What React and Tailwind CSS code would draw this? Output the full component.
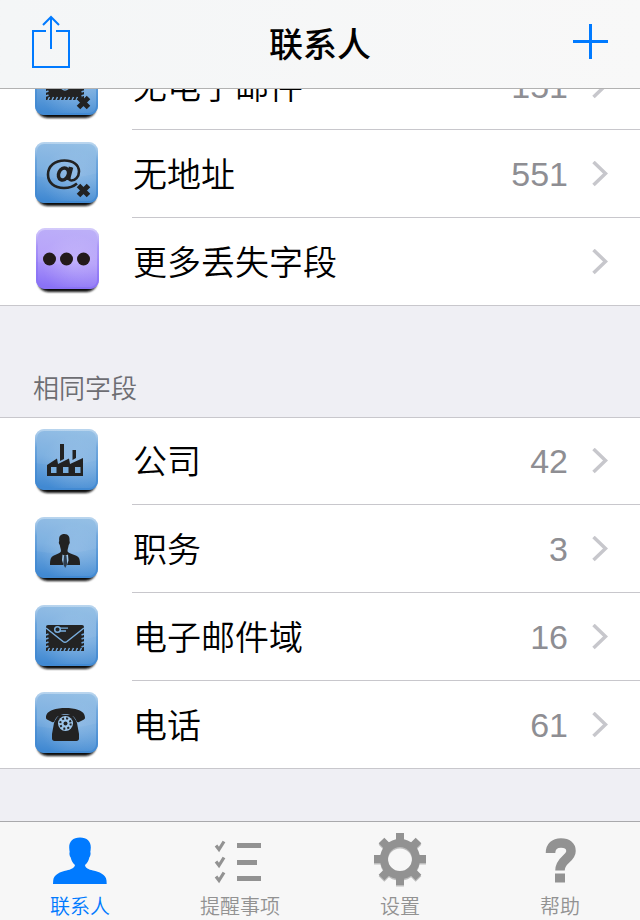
import React from "react";

const BLUE = ["#8fbce4", "#78ade0", "#4189d2"];
const VIOLET = ["#b9abf8", "#b5a0fa", "#8a72f6"];

function Tile({ id, colors = BLUE, x = 1, y = 2, children }) {
  return (
    <svg viewBox="0 1 66 67" className="h-[67px] w-[66px] shrink-0" aria-hidden="true">
      <defs>
        <linearGradient id={id + "-face"} x1="0.6" y1="0" x2="0.4" y2="1">
          <stop offset="0" stopColor={colors[0]} />
          <stop offset="0.5" stopColor={colors[1]} />
          <stop offset="1" stopColor={colors[2]} />
        </linearGradient>
        <radialGradient id={id + "-glow"} cx="0.6" cy="0.6" r="0.5">
          <stop offset="0" stopColor="#fff" stopOpacity="0.16" />
          <stop offset="1" stopColor="#fff" stopOpacity="0" />
        </radialGradient>
        <linearGradient id={id + "-edge"} x1="0" y1="0" x2="0" y2="1">
          <stop offset="0" stopColor="#fff" stopOpacity="0.35" />
          <stop offset="0.3" stopColor={colors[2]} stopOpacity="0.35" />
          <stop offset="1" stopColor={colors[2]} stopOpacity="0.9" />
        </linearGradient>
        <filter id={id + "-blur"} x="-10%" y="-10%" width="120%" height="120%">
          <feGaussianBlur stdDeviation="1" />
        </filter>
      </defs>
      <rect x={x + 2} y={y + 7} width="59" height="57" rx="10" fill="#111" filter={`url(#${id}-blur)`} />
      <rect x={x} y={y} width="63" height="61" rx="9" fill={`url(#${id}-face)`} />
      <rect x={x} y={y} width="63" height="61" rx="9" fill={`url(#${id}-glow)`} />
      <path
        d={`M${x} ${y + 34}V${y + 9}a9 9 0 0 1 9-9h45a9 9 0 0 1 9 9v22q-31 9-63 3z`}
        fill="#fff"
        fillOpacity="0.05"
      />
      <rect x={x + 1} y={y + 1} width="61" height="59" rx="8" fill="none" stroke={`url(#${id}-edge)`} strokeWidth="2" />
      {children}
    </svg>
  );
}

function Cross() {
  return <path d="M44.500 45.500l10 10M54.500 45.500l-10 10" stroke="#222" strokeWidth="5" fill="none" />;
}

function Envelope() {
  return (
    <>
      <path d="M14 22h34a2 2 0 0 1 2 2v24H12V24a2 2 0 0 1 2-2z" fill="#232323" />
      <path
        d="M14 48l1.500-3M18 48l1.500-3M22 48l1.500-3M26 48l1.500-3M30 48l1.500-3M34 48l1.500-3M38 48l1.500-3M42 48l1.500-3M46 48l1.500-3M12 32l2.500-1M12 36l2.500-1M12 40l2.500-1M12 44l2.500-1M47.500 32l2.500-1M47.500 36l2.500-1M47.500 40l2.500-1M47.500 44l2.500-1"
        stroke="#6fa6db"
        strokeWidth="1.500"
      />
    </>
  );
}

function MissingMailIcon() {
  return (
    <Tile id="missing-mail">
      <Envelope />
      <circle cx="31" cy="34" r="4" fill="none" stroke="#7fb3e1" strokeWidth="1.500" />
      <Cross />
    </Tile>
  );
}

function MissingAddressIcon() {
  return (
    <Tile id="missing-address">
      <path
        d="M43 43.500C39 47 34 48 30 48C20 48 14 42.500 14 34.500C14 26 21 20.500 30.500 20.500C39 20.500 45 25 45 31.500C45 37 41 40.500 37.500 40.500C35.500 40.500 35 39 35.500 37L38 27.500"
        fill="none"
        stroke="#222"
        strokeWidth="2.600"
      />
      <path d="M36.500 27l-3 13" fill="none" stroke="#222" strokeWidth="3.500" />
      <ellipse cx="29.500" cy="34" rx="4.800" ry="6.300" transform="rotate(25 29.500 34)" fill="none" stroke="#222" strokeWidth="3.500" />
      <Cross />
    </Tile>
  );
}

function MoreIcon() {
  return (
    <Tile id="more" colors={VIOLET} x={2} y={1}>
      <circle cx="15.500" cy="32" r="6.500" fill="#231a1a" />
      <circle cx="32.500" cy="32" r="6.500" fill="#231a1a" />
      <circle cx="49.500" cy="32" r="6.500" fill="#231a1a" />
    </Tile>
  );
}

function CompanyIcon() {
  return (
    <Tile id="company">
      <path
        d="M13 49V38l10-6.500 1 5.500 11-5.500 1 5.500 13-6v18zM26 17h4v15l-4 2zM38.500 23H42v8l-3.500 2z"
        fill="#222"
      />
      <path d="M17 40h5.500v6H17zM29 40h5.500v6H29zM41 40h5.500v6H41z" fill="#79aede" />
    </Tile>
  );
}

function JobIcon() {
  return (
    <Tile id="job">
      <path
        d="M30.500 19c4 0 5.500 3 5 7 .6 1 .2 3-.8 4-.5 3-1.200 4-1.200 6 0 3 9.500 3.500 11.500 7 1 2 1 5 1 7H16c0-2 0-5 1-7 2-3.500 10-4 10-7 0-2-.7-3-1.200-6-1-1-1.300-3-.6-4-.5-5 1.300-7 5.300-7z"
        fill="#222"
      />
      <path d="M28.500 39.500l2.500 1.500 3-1.500.5 6-1.500 4.500h-3.500L28 45z" fill="#9cc5ea" />
      <path d="M30 41h2.500l.7 8-2 4-2-4z" fill="#2d3d4e" />
    </Tile>
  );
}

function DomainIcon() {
  return (
    <Tile id="domain">
      <Envelope />
      <path d="M12 25l17 13.500q2 1.500 4 0L50 25" fill="none" stroke="#79aede" strokeWidth="1.500" />
      <circle cx="23.500" cy="26.500" r="2.800" fill="none" stroke="#79aede" strokeWidth="1.500" />
      <path d="M26 25.200h8M26 28h6" stroke="#79aede" strokeWidth="1.300" />
    </Tile>
  );
}

function PhoneIcon() {
  return (
    <Tile id="phone">
      <path
        d="M12 27.500C12 20 23 18 31.500 18S51 20 51 27.500c0 1-.3 1.500-1 2l-5 2.500c-1 .4-2 .2-2.500-.8-1.700-5-5.500-7-11-7s-9.300 2-11 7c-.5 1-1.500 1.200-2.500.8l-5-2.500c-.7-.5-1-1-1-2z"
        fill="#222"
      />
      <path
        d="M24.500 22.500H27V25h9v-2.500h2.500V26c2 2 3.500 4 4.500 7l2 11v4.500c0 1.500-1 2.500-2.500 2.500h-22C19 51 18 50 18 48.500V44l2-11c1-3 2.500-5 4.500-7z"
        fill="#222"
      />
      <circle cx="31.500" cy="33.500" r="7.500" fill="#9cc5ea" />
      <circle cx="31.500" cy="33.500" r="5.200" fill="none" stroke="#222" strokeWidth="2" strokeDasharray="2 2.080" />
      <circle cx="31.500" cy="33.500" r="2" fill="#222" />
    </Tile>
  );
}

const missingFields = [
  { label: "无电子邮件", count: "151", Icon: MissingMailIcon },
  { label: "无地址", count: "551", Icon: MissingAddressIcon },
  { label: "更多丢失字段", count: "", Icon: MoreIcon },
];

const sharedFields = [
  { label: "公司", count: "42", Icon: CompanyIcon },
  { label: "职务", count: "3", Icon: JobIcon },
  { label: "电子邮件域", count: "16", Icon: DomainIcon },
  { label: "电话", count: "61", Icon: PhoneIcon },
];

function FieldList({ items, className }) {
  return (
    <ul className={"bg-white " + className}>
      {items.map(({ label, count, Icon }, i) => (
        <li key={label} className={i === items.length - 1 ? "h-22 border-b border-[#c8c7cc]" : "h-22"}>
          <button type="button" className="flex h-full w-full items-stretch pl-[34px] text-left">
            <span className="flex w-[98px] shrink-0 items-center">
              <Icon />
            </span>
            <span
              className={
                "flex min-w-0 flex-1 items-center pr-8 pl-px " +
                (i === items.length - 1 ? "" : "border-b border-[#c8c7cc]")
              }
            >
              <span className="min-w-0 flex-1 truncate pt-[2px] text-[34px] leading-[50px] font-[350] text-black">
                {label}
              </span>
              <span className="mr-6 text-[34px] leading-[50px] text-[#8e8e93]">{count}</span>
              <svg viewBox="0 0 16 26" className="h-[26px] w-4 shrink-0" aria-hidden="true">
                <path d="M1.500 1L13.500 12.500 1.500 24" fill="none" stroke="#c7c7cc" strokeWidth="3.500" />
              </svg>
            </span>
          </button>
        </li>
      ))}
    </ul>
  );
}

function ContactsGlyph() {
  return (
    <path
      d="M28 5.500c7 0 11 4 10.800 10-.1 2-.3 3.500-.5 4.500.6 1 .3 4-1 5.500-.6 3.500-2 5.500-4.300 7.500.2 3 3.500 4.500 8 5.500 6 1.500 13 3.500 13.500 10l.2 3.500H1l.2-3.500C1.700 42 8.500 40 14.500 38.500c4.500-1 8-2.500 8.500-5.500-2.300-2-3.600-4-4.300-7.500-1.300-1.500-1.600-4.500-1-5.500-.2-1-.4-2.500-.5-4.500C17 9.500 21 5.500 28 5.500z"
      fill="currentColor"
    />
  );
}

function RemindersGlyph() {
  return (
    <>
      <path
        d="M4 13.500l3 4 5-8M4 29.500l3 4 5-8M4 44.500l3 4 5-8"
        fill="none"
        stroke="currentColor"
        strokeWidth="3.200"
      />
      <path d="M25 11h24v5H25zM25 28h20v5H25zM25 44h24v5H25z" fill="currentColor" />
    </>
  );
}

function GearShape({ y, color }) {
  return (
    <g transform={`translate(28 ${y})`} stroke={color} fill="none">
      <circle r="16" strokeWidth="8" />
      <path d="M0-26v8M0 18v8M-26 0h8M18 0h8M-18.500-18.500l6 6M18.500-18.500l-6 6M-18.500 18.500l6-6M18.500 18.500l-6-6" strokeWidth="8" />
    </g>
  );
}

function SettingsGlyph() {
  return (
    <>
      <GearShape y={28.5} color="#bdbdbd" />
      <GearShape y={27} color="currentColor" />
    </>
  );
}

function HelpGlyph() {
  return (
    <>
      <path
        d="M18.500 21C18.500 14.500 22.500 11 29 11S39 14 39 19c0 8-11 8.500-11 19.500"
        fill="none"
        stroke="currentColor"
        strokeWidth="9.500"
      />
      <path d="M23 41.500h10V50.500H23z" fill="currentColor" />
    </>
  );
}

const tabs = [
  { label: "联系人", Glyph: ContactsGlyph, active: true },
  { label: "提醒事项", Glyph: RemindersGlyph },
  { label: "设置", Glyph: SettingsGlyph },
  { label: "帮助", Glyph: HelpGlyph },
];

export default function App() {
  return (
    <div className="flex h-screen flex-col overflow-hidden bg-[#efeff4] font-['Liberation_Sans','Noto_Sans_CJK_SC',sans-serif]">
      <header className="relative z-10 grid shrink-0 grid-cols-3 items-center border-b border-[#b2b2b2] bg-linear-to-r from-[#f4f6f7] to-[#f8f8f8] px-8 text-[#007aff]">
        <button type="button" aria-label="分享" className="justify-self-start">
          <svg viewBox="0 0 38 58" className="h-[58px] w-[38px]" aria-hidden="true">
            <path d="M14 16H1v36h36V16H24M19 34V2M11 10l8-8 8 8" fill="none" stroke="currentColor" strokeWidth="2" />
          </svg>
        </button>
        <h1 className="pt-5 pb-[18px] text-center text-[34px] leading-[50px] font-medium whitespace-nowrap text-black">联系人</h1>
        <button type="button" aria-label="添加" className="justify-self-end">
          <svg viewBox="0 0 35 40" className="h-10 w-[35px]" aria-hidden="true">
            <path d="M17.500 0v35M0 17.500h35" fill="none" stroke="currentColor" strokeWidth="3" />
          </svg>
        </button>
      </header>

      <main className="min-h-0 flex-1 overflow-hidden">
        <FieldList items={missingFields} className="-mt-[47px]" />
        <h2 className="border-b border-[#c8c7cc] px-[33px] pt-[65px] pb-[10px] text-[26px] leading-9 font-[350] text-[#6d6d72]">
          相同字段
        </h2>
        <FieldList items={sharedFields} className="-mt-px border-t border-[#c8c7cc] [&>li:first-child]:h-[87px]" />
      </main>

      <nav className="grid shrink-0 grid-cols-4 border-t border-[#a9a9ac] bg-[#f7f7f7] pt-[10px] pb-px">
        {tabs.map(({ label, Glyph, active }) => (
          <button
            key={label}
            type="button"
            aria-current={active ? "page" : undefined}
            className={
              "flex flex-col items-center gap-[7px] text-[20px] leading-6 font-[350] " +
              (active ? "text-[#007aff]" : "text-[#929292]")
            }
          >
            <svg viewBox="0 0 56 56" className="size-14" aria-hidden="true">
              <Glyph />
            </svg>
            {label}
          </button>
        ))}
      </nav>
    </div>
  );
}
